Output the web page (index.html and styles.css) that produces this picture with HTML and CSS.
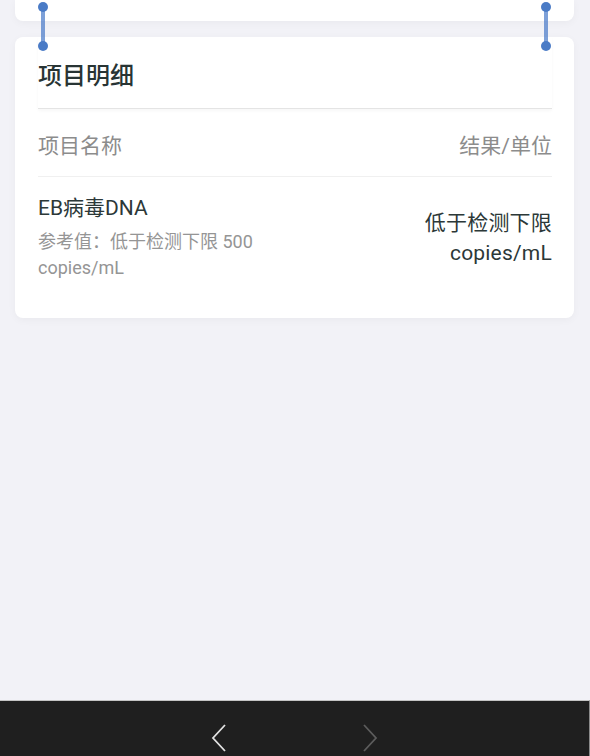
FILE: index.html
```html
<!DOCTYPE html>
<html>
<head>
  <meta charset="utf-8">
  <title>项目明细</title>
  <link rel="stylesheet" href="styles.css">
</head>
<body>
  <div class="page">
    <div class="cards">
      <div class="card card-prev"></div>

      <div class="card detail">
        <h2 class="detail-title">项目明细</h2>
        <div class="detail-head">
          <span>项目名称</span>
          <span>结果/单位</span>
        </div>
        <div class="detail-row">
          <div class="item-info">
            <div class="item-name">EB病毒DNA</div>
            <div class="item-ref">参考值：低于检测下限 500 copies/mL</div>
          </div>
          <div class="item-result">低于检测下限 copies/mL</div>
        </div>
      </div>

      <!-- binder clips between the two cards -->
      <span class="clip clip-left"></span>
      <span class="clip clip-right"></span>
    </div>
  </div>

  <div class="toolbar">
    <a class="nav-btn nav-back">
      <svg width="16" height="28" viewBox="0 0 16 28"><path d="M14 1 L2 14 L14 27" fill="none" stroke="#e2e2e2" stroke-width="1.8"/></svg>
    </a>
    <a class="nav-btn nav-next">
      <svg width="16" height="28" viewBox="0 0 16 28"><path d="M2 1 L14 14 L2 27" fill="none" stroke="#5c5c5c" stroke-width="1.8"/></svg>
    </a>
  </div>
</body>
</html>
```

FILE: styles.css
```css
* {
  box-sizing: border-box;
}

html, body {
  margin: 0;
  height: 100%;
}

body {
  display: flex;
  flex-direction: column;
  background-color: #f2f2f7;
  font-family: Roboto, "Noto Sans CJK SC", sans-serif;
  color: #2c3838;
}

.page {
  flex: 1;
  padding: 0 16px 0 15px;
}

.cards {
  position: relative;
  display: flex;
  flex-direction: column;
  gap: 16px;
}

.card {
  background-color: #fff;
  border-radius: 8px;
  box-shadow: 0 2px 8px rgba(0, 0, 0, .04);
}

.card-prev {
  height: 21px;
  border-radius: 0 0 8px 8px;
}

.detail {
  padding: 0 22px 0 23px;
}

.detail-title {
  margin: 0;
  padding: 24px 0 16px;
  font-size: 24px;
  line-height: 31px;
  font-weight: 500;
  color: #283434;
  border-bottom: 1px solid #e4e4e4;
  box-shadow: 0 2px 3px rgba(0, 0, 0, .03);
}

.detail-head {
  display: flex;
  justify-content: space-between;
  padding: 25px 0 18px;
  font-size: 21px;
  line-height: 24px;
  color: #8c8c8c;
  border-bottom: 1px solid #f0f0f0;
}

.detail-row {
  display: flex;
  justify-content: space-between;
  align-items: center;
  padding: 17px 0 37px;
}

.item-info {
  flex: 0 0 50%;
}

.item-name {
  font-size: 21px;
  line-height: 28px;
  color: #2c3838;
}

.item-ref {
  margin-top: 7px;
  font-size: 18px;
  line-height: 26px;
  color: #959595;
}

.item-result {
  max-width: 140px;
  text-align: right;
  font-size: 21px;
  line-height: 30px;
  letter-spacing: .2px;
  color: #2c3838;
}

.clip {
  position: absolute;
  top: 2px;
  width: 10px;
  height: 50px;
}

.clip::before {
  content: "";
  position: absolute;
  left: 3px;
  top: 5px;
  width: 4px;
  height: 39px;
  background-color: rgba(70, 120, 200, .7);
}

.clip::after {
  content: "";
  position: absolute;
  left: 0;
  top: 0;
  width: 10px;
  height: 10px;
  border-radius: 50%;
  background-color: #4a7bc6;
  box-shadow: 0 39px 0 #4a7bc6;
}

.clip-left {
  left: 23px;
}

.clip-right {
  left: 526px;
}

.toolbar {
  flex: 0 0 56px;
  display: flex;
  justify-content: center;
  align-items: center;
  gap: 123px;
  padding-top: 19px;
  background-color: #1f1f1f;
  border-top: 1px solid #c4c4c4;
  border-right: 1px solid #8a8a8a;
}

.nav-btn {
  display: flex;
  width: 28px;
  justify-content: center;
}
```
